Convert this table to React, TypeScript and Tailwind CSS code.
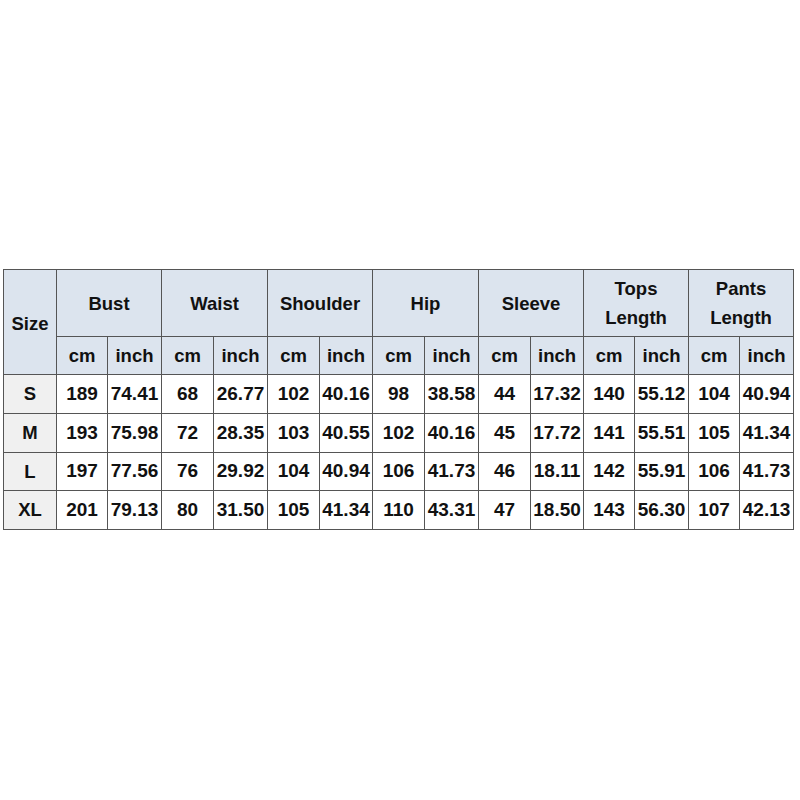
import React from 'react'

const groups = [
    ['Bust'],
    ['Waist'],
    ['Shoulder'],
    ['Hip'],
    ['Sleeve'],
    ['Tops', 'Length'],
    ['Pants', 'Length'],
]

const rows = [
    ['S', '189', '74.41', '68', '26.77', '102', '40.16', '98', '38.58', '44', '17.32', '140', '55.12', '104', '40.94'],
    ['M', '193', '75.98', '72', '28.35', '103', '40.55', '102', '40.16', '45', '17.72', '141', '55.51', '105', '41.34'],
    ['L', '197', '77.56', '76', '29.92', '104', '40.94', '106', '41.73', '46', '18.11', '142', '55.91', '106', '41.73'],
    ['XL', '201', '79.13', '80', '31.50', '105', '41.34', '110', '43.31', '47', '18.50', '143', '56.30', '107', '42.13'],
]

const rowHeights = ['h-[39px]', 'h-[39px]', 'h-[38px]', 'h-[39px]']

const widths = ['w-[53px]', 'w-[51px]', 'w-[54px]', 'w-[52px]', 'w-[54px]', 'w-[52px]', 'w-[53px]', 'w-[52px]', 'w-[54px]', 'w-[52px]', 'w-[53px]', 'w-[51px]', 'w-[54px]', 'w-[51px]', 'w-[54px]']

export default function App() {
    return (
        <div className="w-[800px] h-[800px] bg-white pt-[269px] pl-[3px] font-['Liberation_Sans',Arial,sans-serif] font-bold text-[18.5px] text-[#111]">
            <table className="table-fixed border-collapse border border-[#333] w-[791px]">
                <colgroup>
                    {widths.map((w, i) => (
                        <col key={i} className={w} />
                    ))}
                </colgroup>
                <thead>
                    <tr className="h-[67px] bg-[#dce4ee]">
                        <th rowSpan={2} className="border border-[#555] text-center align-middle pt-[3px]">Size</th>
                        {groups.map((g) => (
                            <th key={g.join(' ')} colSpan={2} className="border border-[#555] text-center align-middle leading-[29px]">
                                {g.map((line) => (
                                    <div key={line}>{line}</div>
                                ))}
                            </th>
                        ))}
                    </tr>
                    <tr className="h-[38px] bg-[#dce4ee]">
                        {groups.map((g) => (
                            <React.Fragment key={g.join(' ')}>
                                <th className="border border-[#555] text-center">cm</th>
                                <th className="border border-[#555] text-center">inch</th>
                            </React.Fragment>
                        ))}
                    </tr>
                </thead>
                <tbody>
                    {rows.map((r, ri) => (
                        <tr key={r[0]} className={rowHeights[ri]}>
                            {r.map((c, ci) => (
                                <td
                                    key={ci}
                                    className={
                                        ci === 0
                                            ? 'border border-[#555] bg-[#f0f0f0] text-center'
                                            : 'border border-[#555] text-center px-0 text-[19px] whitespace-nowrap'
                                    }
                                >
                                    {c}
                                </td>
                            ))}
                        </tr>
                    ))}
                </tbody>
            </table>
        </div>
    )
}
